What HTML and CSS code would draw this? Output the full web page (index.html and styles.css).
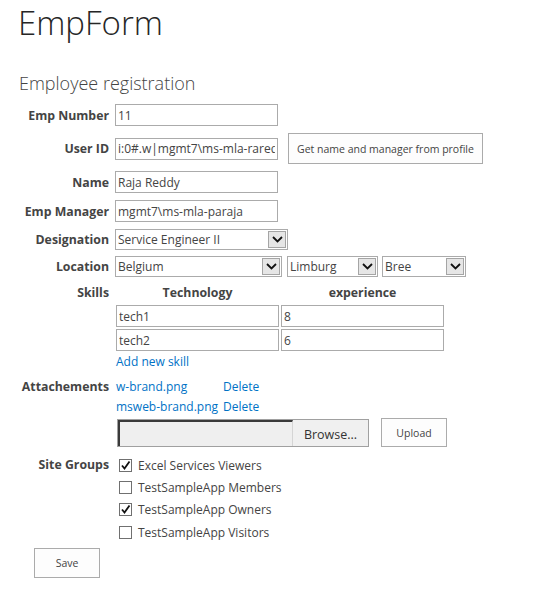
FILE: index.html
```html
<!DOCTYPE html>
<html>
<head>
<meta charset="utf-8">
<title>EmpForm</title>
<link rel="stylesheet" href="styles.css">
</head>
<body>
<h1 class="title">EmpForm</h1>
<h2 class="subtitle">Employee registration</h2>
<div class="form">
  <div class="row r-first">
    <label class="lbl">Emp Number</label>
    <div class="field"><input class="txt" type="text" value="11"></div>
  </div>
  <div class="row r-gap7">
    <label class="lbl">User ID</label>
    <div class="field field-inline"><input class="txt" type="text" value="i:0#.w|mgmt7\ms-mla-rareddy"><button class="btn btn-profile" type="button">Get name and manager from profile</button></div>
  </div>
  <div class="row r-gap7">
    <label class="lbl">Name</label>
    <div class="field"><input class="txt" type="text" value="Raja Reddy"></div>
  </div>
  <div class="row r-gap7">
    <label class="lbl">Emp Manager</label>
    <div class="field"><input class="txt" type="text" value="mgmt7\ms-mla-paraja"></div>
  </div>
  <div class="row r-gap7">
    <label class="lbl">Designation</label>
    <div class="field">
      <div class="sel sel-desig"><span class="sel-text">Service Engineer II</span><span class="sel-arrow"><svg width="11" height="7" viewBox="0 0 11 7"><path d="M1 1 L5.5 5.5 L10 1" fill="none" stroke="#111" stroke-width="1.8"/></svg></span></div>
    </div>
  </div>
  <div class="row r-gap6">
    <label class="lbl">Location</label>
    <div class="field field-inline sel-group">
      <div class="sel sel-country"><span class="sel-text">Belgium</span><span class="sel-arrow"><svg width="11" height="7" viewBox="0 0 11 7"><path d="M1 1 L5.5 5.5 L10 1" fill="none" stroke="#111" stroke-width="1.8"/></svg></span></div>
      <div class="sel sel-region"><span class="sel-text">Limburg</span><span class="sel-arrow"><svg width="11" height="7" viewBox="0 0 11 7"><path d="M1 1 L5.5 5.5 L10 1" fill="none" stroke="#111" stroke-width="1.8"/></svg></span></div>
      <div class="sel sel-city"><span class="sel-text">Bree</span><span class="sel-arrow"><svg width="11" height="7" viewBox="0 0 11 7"><path d="M1 1 L5.5 5.5 L10 1" fill="none" stroke="#111" stroke-width="1.8"/></svg></span></div>
    </div>
  </div>
  <div class="row row-top r-gap6">
    <label class="lbl lbl-line">Skills</label>
    <div class="field">
      <div class="skills">
        <div class="skill-head">Technology</div>
        <div class="skill-head">experience</div>
        <input class="txt" type="text" value="tech1">
        <input class="txt" type="text" value="8">
        <input class="txt" type="text" value="tech2">
        <input class="txt" type="text" value="6">
      </div>
      <a class="link line add-skill" href="#">Add new skill</a>
    </div>
  </div>
  <div class="row row-top r-gap5">
    <label class="lbl lbl-line">Attachements</label>
    <div class="field">
      <div class="attach">
        <a class="link line" href="#">w-brand.png</a><a class="link line" href="#">Delete</a>
        <a class="link line" href="#">msweb-brand.png</a><a class="link line" href="#">Delete</a>
      </div>
      <div class="upload-row">
        <div class="file"><span class="file-box"></span><span class="file-btn">Browse...</span></div>
        <button class="btn btn-upload" type="button">Upload</button>
      </div>
    </div>
  </div>
  <div class="row row-top r-gap7">
    <label class="lbl lbl-check">Site Groups</label>
    <div class="field">
      <div class="check"><span class="cb"><svg width="11" height="11" viewBox="0 0 11 11"><path d="M2 5.5 L4.5 8.5 L9.5 1.5" fill="none" stroke="#111" stroke-width="1.8"/></svg></span>Excel Services Viewers</div>
      <div class="check"><span class="cb"></span>TestSampleApp Members</div>
      <div class="check"><span class="cb"><svg width="11" height="11" viewBox="0 0 11 11"><path d="M2 5.5 L4.5 8.5 L9.5 1.5" fill="none" stroke="#111" stroke-width="1.8"/></svg></span>TestSampleApp Owners</div>
      <div class="check"><span class="cb"></span>TestSampleApp Visitors</div>
    </div>
  </div>
  <div class="save-row">
    <button class="btn btn-save" type="button">Save</button>
  </div>
</div>
</body>
</html>
```
FILE: styles.css
```css
body {
  margin: 0;
  background: #fff;
  color: #444;
  font-family: "Open Sans", "Noto Sans", sans-serif;
  font-size: 12px;
}

.title {
  margin: 0;
  padding-left: 18px;
  font-size: 33px;
  line-height: normal;
  font-weight: 300;
  color: #262626;
}

.subtitle {
  margin: 26px 0 0;
  padding-left: 19px;
  font-size: 18px;
  line-height: 24px;
  font-weight: 300;
  color: #444;
}

.form {
  margin-top: 9px;
  display: flex;
  flex-direction: column;
}

.row {
  display: flex;
  align-items: center;
}

.row-top {
  align-items: flex-start;
}

.r-gap5 { margin-top: 5px; }
.r-gap6 { margin-top: 6px; }
.r-gap7 { margin-top: 7px; }

.lbl {
  flex: none;
  width: 109px;
  text-align: right;
  font-weight: bold;
  font-size: 12.3px;
  white-space: nowrap;
  color: #444;
}

.lbl-line {
  line-height: 20px;
}

.lbl-check {
  line-height: 22.3px;
}

.field {
  margin-left: 6px;
}

.field-inline {
  display: flex;
  align-items: center;
}

.txt {
  box-sizing: border-box;
  width: 163px;
  height: 22px;
  margin: 0;
  padding: 0 2px;
  border: 1px solid #ababab;
  font-family: "Open Sans", "Noto Sans", sans-serif;
  font-size: 12px;
  color: #444;
  background: #fff;
}

.btn {
  box-sizing: border-box;
  margin: 0;
  padding: 0 8px;
  border: 1px solid #ababab;
  background: #fdfdfd;
  color: #444;
  font-family: "Open Sans", "Noto Sans", sans-serif;
  font-size: 10.5px;
  white-space: nowrap;
}

.btn-profile {
  margin-left: 10px;
  width: 195px;
  height: 31px;
}

.sel {
  box-sizing: border-box;
  display: flex;
  align-items: center;
  height: 21px;
  border: 1px solid #ababab;
  background: #fff;
}

.sel-text {
  flex: 1;
  padding-left: 2px;
  white-space: nowrap;
  overflow: hidden;
}

.sel-arrow {
  box-sizing: border-box;
  display: flex;
  align-items: center;
  justify-content: center;
  width: 18px;
  height: 17px;
  margin-right: 1px;
  border: 1px solid #a5a5a5;
  background: #e6e6e6;
}

.sel-desig { width: 173px; }
.sel-group { gap: 5px; }
.sel-country { width: 167px; }
.sel-region { width: 91px; }
.sel-city { width: 84px; margin-left: -1px; }

.skills {
  display: grid;
  grid-template-columns: 163px 163px;
  column-gap: 2px;
  row-gap: 2px;
  margin-left: 1px;
}

.skill-head {
  height: 20px;
  line-height: 20px;
  text-align: center;
  font-weight: bold;
  font-size: 12.3px;
}

.link {
  color: #0072c6;
  text-decoration: none;
}

.line {
  display: block;
  line-height: 20px;
  white-space: nowrap;
}

.field > .line {
  margin-left: 1px;
}

.field > .add-skill {
  margin-top: 1px;
}

.attach {
  display: grid;
  grid-template-columns: 107px auto;
  margin-left: 1px;
}

.upload-row {
  display: flex;
  align-items: center;
  margin-top: 1px;
  margin-left: 2px;
}

.file {
  box-sizing: border-box;
  display: flex;
  width: 252px;
  height: 28px;
  border: 1px solid #a0a0a0;
  background: #f0f0f0;
}

.file-box {
  box-sizing: border-box;
  width: 175px;
  height: 100%;
  border-top: 2px solid #3a3a3a;
  border-left: 2px solid #3a3a3a;
  border-right: 1px solid #d5d5d5;
  background: #efefef;
}

.file-btn {
  flex: 1;
  display: flex;
  align-items: center;
  justify-content: center;
  padding-top: 3px;
  color: #333;
  font-size: 12.5px;
}

.btn-upload {
  margin-left: 12px;
  width: 66px;
  height: 29px;
}

.check {
  display: flex;
  align-items: center;
  height: 22.3px;
  white-space: nowrap;
}

.cb {
  box-sizing: border-box;
  display: flex;
  align-items: center;
  justify-content: center;
  width: 13px;
  height: 13px;
  margin-left: 4px;
  margin-right: 6px;
  border: 1px solid #707070;
  background: #fff;
}

.save-row {
  margin-top: 5px;
  padding-left: 34px;
}

.btn-save {
  width: 66px;
  height: 30px;
}
```
